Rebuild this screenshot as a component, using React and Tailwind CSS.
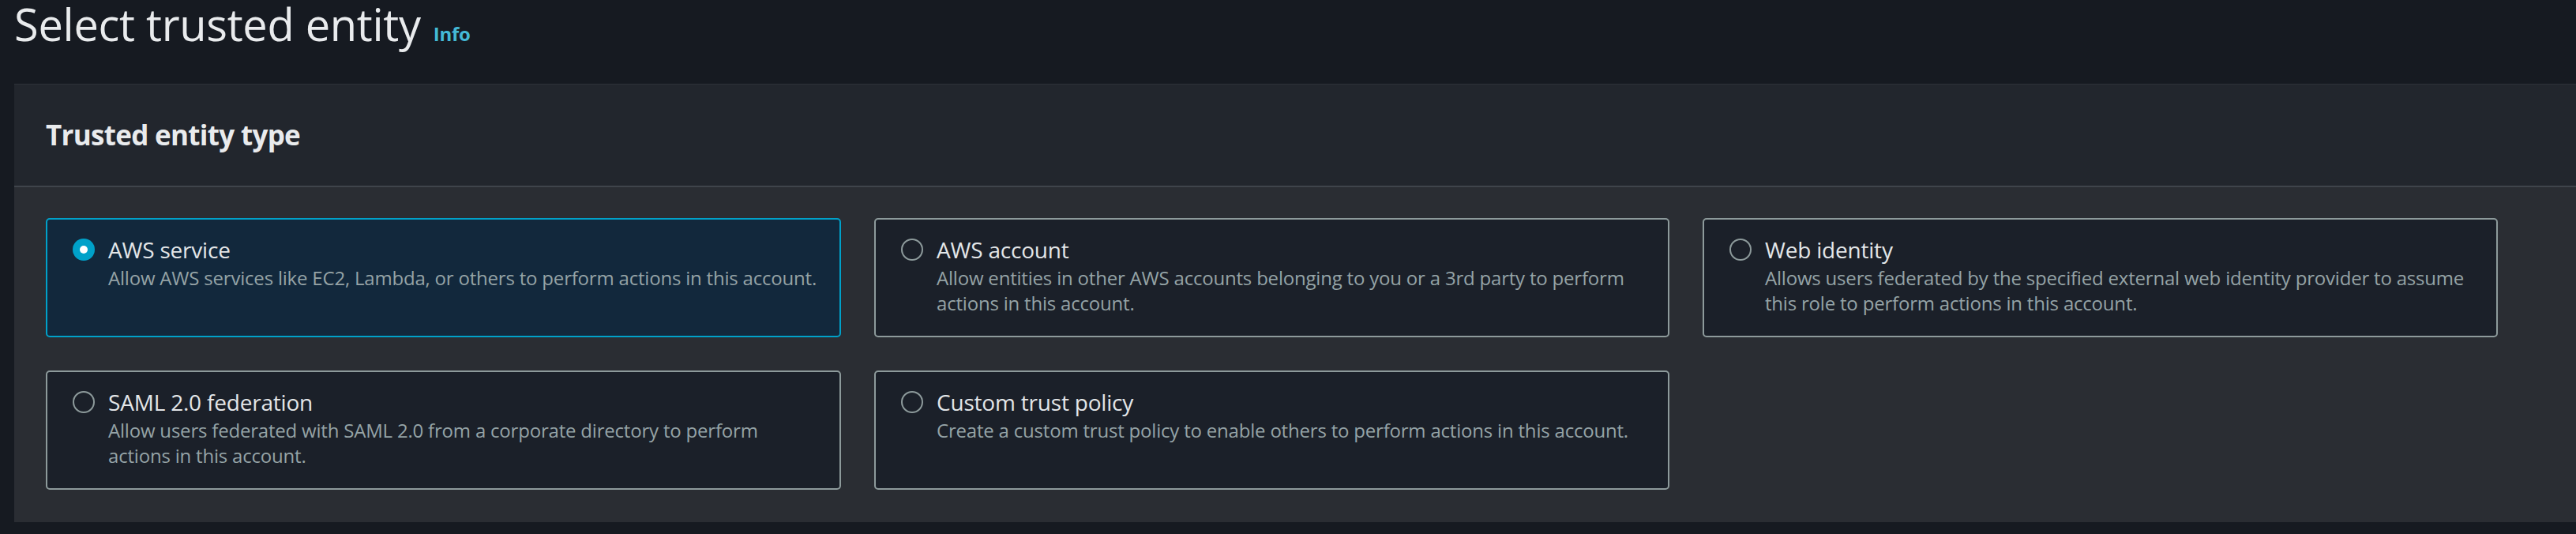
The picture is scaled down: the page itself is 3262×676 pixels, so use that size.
import { useState } from 'react';

const options = [
  {
    id: 'service',
    label: 'AWS service',
    desc: 'Allow AWS services like EC2, Lambda, or others to perform actions in this account.',
  },
  {
    id: 'account',
    label: 'AWS account',
    desc: 'Allow entities in other AWS accounts belonging to you or a 3rd party to perform actions in this account.',
  },
  {
    id: 'web',
    label: 'Web identity',
    desc: 'Allows users federated by the specified external web identity provider to assume this role to perform actions in this account.',
  },
  {
    id: 'saml',
    label: 'SAML 2.0 federation',
    desc: 'Allow users federated with SAML 2.0 from a corporate directory to perform actions in this account.',
  },
  {
    id: 'custom',
    label: 'Custom trust policy',
    desc: 'Create a custom trust policy to enable others to perform actions in this account.',
  },
];

const Radio = ({ checked }) =>
  checked ? (
    <span className="flex h-[28px] w-[28px] shrink-0 items-center justify-center rounded-full bg-[#00a1c9]">
      <span className="h-[10px] w-[10px] rounded-full bg-white" />
    </span>
  ) : (
    <span className="h-[28px] w-[28px] shrink-0 rounded-full border-2 border-[#8d9a9b]" />
  );

const Tile = ({ option, checked, onSelect }) => (
  <button
    type="button"
    onClick={onSelect}
    className={`flex items-start gap-[17px] rounded-[5px] border-2 pl-[32px] pr-[22px] pt-[18px] pb-[25px] text-left ${
      checked ? 'border-[#00a1c9] bg-[#12283c]' : 'border-[#8d9a9b] bg-[#1b2029]'
    }`}
  >
    <span className="flex h-[40px] items-center">
      <Radio checked={checked} />
    </span>
    <span className="flex min-w-0 flex-1 flex-col">
      <span className="text-[28px] leading-[40px] tracking-[-0.2px] text-[#e3e6e8]">{option.label}</span>
      <span className="text-[24px] leading-[32px] tracking-[-0.2px] text-[#95a3a6]">{option.desc}</span>
    </span>
  </button>
);

export default function App() {
  const [selected, setSelected] = useState('service');

  return (
    <div className="h-[676px] w-full overflow-hidden bg-[#161a21] pl-[18px] font-['Open_Sans',sans-serif]">
      {/* Заголовок страницы */}
      <div className="flex h-[60px] items-baseline gap-[16px] pt-[2px]">
        <h1 className="text-[56px] font-normal leading-[56px] tracking-[-0.3px] text-[#e9ebed]">Select trusted entity</h1>
        <a className="text-[24px] font-bold leading-none tracking-[-0.3px] text-[#44b9d6]">Info</a>
      </div>

      {/* Панель выбора */}
      <div className="mt-[46px] bg-[#2a2d33]">
        <div className="flex h-[131px] items-center border-t border-b-2 border-t-[#2d3138] border-b-[#3f444b] bg-[#22262d] pl-[40px]">
          <h2 className="text-[35px] font-bold leading-[44px] tracking-[-0.7px] text-[#e9ebed]">Trusted entity type</h2>
        </div>
        <div className="grid grid-cols-[repeat(3,1007px)] gap-x-[42px] gap-y-[42px] pl-[40px] pt-[39px] pb-[41px]">
          {options.map((o) => (
            <Tile key={o.id} option={o} checked={selected === o.id} onSelect={() => setSelected(o.id)} />
          ))}
        </div>
      </div>
    </div>
  );
}
